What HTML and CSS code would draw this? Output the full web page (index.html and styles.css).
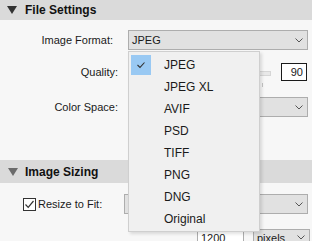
FILE: index.html
```html
<!DOCTYPE html>
<html lang="en">
<head>
    <meta charset="UTF-8">
    <meta name="viewport" content="width=device-width, initial-scale=1.0">
    <title>Export Settings</title>
    <link rel="stylesheet" href="styles.css">
</head>
<body>
    <div class="panel">
        <div class="section-head">
            <span class="tri"></span>File Settings
        </div>
        <div class="section-body file-body">
            <div class="row row-format">
                <label class="lbl">Image Format:</label>
                <div class="select">
                    <span>JPEG</span>
                    <svg class="chev" width="8" height="5" viewBox="0 0 8 5"><path d="M0.5 0.5 L4 4 L7.5 0.5" fill="none" stroke="#555" stroke-width="1"/></svg>
                </div>
            </div>
            <div class="row row-quality">
                <label class="lbl">Quality:</label>
                <div class="slider">
                    <div class="track"></div>
                    <div class="tick"></div>
                </div>
                <input class="num" type="text" value="90">
            </div>
            <div class="row row-space">
                <label class="lbl">Color Space:</label>
                <div class="select">
                    <span>sRGB</span>
                    <svg class="chev" width="8" height="5" viewBox="0 0 8 5"><path d="M0.5 0.5 L4 4 L7.5 0.5" fill="none" stroke="#555" stroke-width="1"/></svg>
                </div>
            </div>
        </div>

        <div class="section-head sizing">
            <span class="tri"></span>Image Sizing
        </div>
        <div class="section-body sizing-body">
            <div class="row row-resize">
                <label class="check-lbl"><span class="box"><svg width="11" height="11" viewBox="0 0 11 11"><path d="M1.5 5.5 L4.2 8.3 L9.5 2" fill="none" stroke="#333" stroke-width="1.2"/></svg></span>Resize to Fit:</label>
                <div class="select">
                    <span>Long Edge</span>
                    <svg class="chev" width="8" height="5" viewBox="0 0 8 5"><path d="M0.5 0.5 L4 4 L7.5 0.5" fill="none" stroke="#555" stroke-width="1"/></svg>
                </div>
            </div>
            <div class="row row-size">
                <input class="num wide-num" type="text" value="1200">
                <div class="select unit">
                    <span>pixels</span>
                    <svg class="chev" width="8" height="5" viewBox="0 0 8 5"><path d="M0.5 0.5 L4 4 L7.5 0.5" fill="none" stroke="#555" stroke-width="1"/></svg>
                </div>
            </div>
        </div>

        <ul class="menu">
            <li class="item selected"><span class="mark"><svg width="10" height="8" viewBox="0 0 10 8"><path d="M1.5 4 L4 6.4 L8.5 1.5" fill="none" stroke="#333" stroke-width="1.1"/></svg></span>JPEG</li>
            <li class="item"><span class="mark"></span>JPEG XL</li>
            <li class="item"><span class="mark"></span>AVIF</li>
            <li class="item"><span class="mark"></span>PSD</li>
            <li class="item"><span class="mark"></span>TIFF</li>
            <li class="item"><span class="mark"></span>PNG</li>
            <li class="item"><span class="mark"></span>DNG</li>
            <li class="item"><span class="mark"></span>Original</li>
        </ul>
    </div>
</body>
</html>
```

FILE: styles.css
```css
body {
    margin: 0;
    font-family: "Liberation Sans", Arial, sans-serif;
    font-size: 11px;
    color: #1a1a1a;
    background: #f7f7f7;
}
.panel {
    position: relative;
    width: 312px;
    height: 241px;
    overflow: hidden;
    background: #f7f7f7;
}
.section-head {
    display: flex;
    align-items: center;
    height: 20px;
    padding-left: 7px;
    background: #dadada;
    font-size: 12px;
    font-weight: bold;
    color: #111;
}
.section-head .tri {
    width: 0;
    height: 0;
    margin-right: 8px;
    border-left: 5px solid transparent;
    border-right: 5px solid transparent;
    border-top: 8px solid #333;
}
.section-head.sizing {
    height: 23px;
    padding-left: 8px;
}
.section-head.sizing .tri {
    border-top-color: #6b6b6b;
    margin-right: 7px;
}
.section-body {
    display: flex;
    flex-direction: column;
}
.file-body {
    padding: 10px 4px 43px 0;
}
.row {
    display: flex;
    align-items: center;
}
.lbl {
    width: 118px;
    text-align: right;
    margin-right: 10px;
}
.row-format .lbl {
    width: 113px;
    margin-right: 15px;
}
.select {
    flex: 1;
    display: flex;
    align-items: center;
    justify-content: space-between;
    height: 20px;
    box-sizing: border-box;
    padding: 0 4px 0 3px;
    background: #e1e1e1;
    border: 1px solid #adadad;
    font-size: 11px;
}
.row-format, .row-space {
    height: 20px;
}
.row-quality {
    height: 18px;
    margin-top: 13px;
}
.row-space {
    margin-top: 16px;
}
.slider {
    position: relative;
    width: 143px;
    height: 18px;
    margin-right: 10px;
}
.track {
    position: absolute;
    left: 2px;
    right: 0;
    top: 8px;
    height: 3px;
    background: #e8e8e8;
    border: 1px solid #d6d6d6;
}
.tick {
    position: absolute;
    left: 134px;
    top: 20px;
    width: 1px;
    height: 4px;
    background: #c4c4c4;
}
.num {
    width: 26px;
    height: 18px;
    box-sizing: border-box;
    padding: 0 3px 0 0;
    border: 1px solid #1a1a1a;
    background: #fff;
    font-family: "Liberation Sans", Arial, sans-serif;
    font-size: 11px;
    text-align: right;
    color: #1a1a1a;
}
.sizing-body {
    padding: 11px 4px 0 0;
}
.row-resize {
    height: 20px;
}
.check-lbl {
    display: flex;
    align-items: center;
    width: 101px;
    margin-left: 23px;
}
.check-lbl .box {
    display: flex;
    align-items: center;
    justify-content: center;
    width: 13px;
    height: 13px;
    box-sizing: border-box;
    border: 1px solid #333;
    background: #fff;
    margin-right: 2px;
}
.row-size {
    margin-top: 15px;
    height: 17px;
    padding-left: 197px;
}
.row-size .num,
.row-size .select {
    height: 17px;
}
.wide-num {
    width: 47px;
    border-color: #adadad;
    text-align: left;
    padding-left: 3px;
    margin-right: 9px;
}
.select.unit {
    margin-right: -2px;
}
.menu {
    position: absolute;
    left: 128px;
    top: 51px;
    width: 132px;
    height: 181px;
    box-sizing: border-box;
    margin: 0;
    padding: 2px 2px;
    list-style: none;
    background: #f0f0f0;
    border: 1px solid #cfcfcf;
    box-shadow: 2px 2px 3px rgba(0, 0, 0, 0.12);
    font-size: 12px;
}
.item {
    display: flex;
    align-items: center;
    height: 22px;
}
.mark {
    display: flex;
    align-items: center;
    justify-content: center;
    width: 20px;
    height: 20px;
    margin-right: 13px;
}
.item.selected .mark {
    background: #99c9f3;
}
```
